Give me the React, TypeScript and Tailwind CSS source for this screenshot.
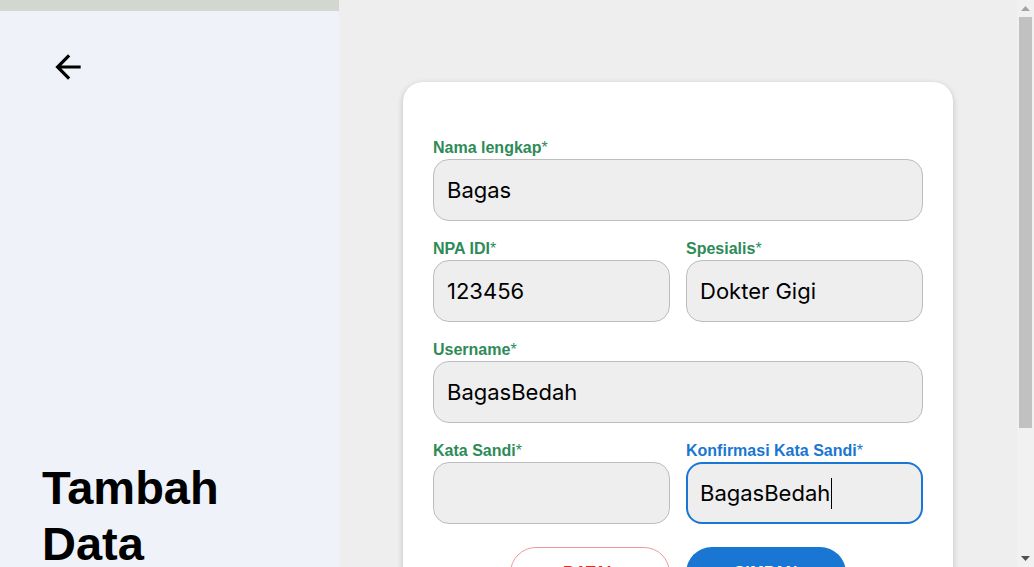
import React from "react";

const labelCls =
  "block h-[18px] leading-[18px] text-[16px] font-bold text-[#2e8b57] [font-family:'Liberation_Sans',Arial,sans-serif] whitespace-nowrap";

function Field({
  label,
  value,
  focused,
}: {
  label: string;
  value: string;
  focused?: boolean;
}) {
  return (
    <div className="flex flex-col">
      <label
        className={
          focused
            ? "block h-[18px] leading-[18px] text-[16px] font-bold text-[#1976d2] [font-family:'Liberation_Sans',Arial,sans-serif] whitespace-nowrap"
            : labelCls
        }
      >
        {label}
        <span className="font-normal">*</span>
      </label>
      <div
        className={
          focused
            ? "mt-[2px] h-[62px] rounded-2xl border-2 border-[#1976d2] bg-[#eeeeee] pl-[12px] flex items-center text-[22px] text-black [font-family:Inter,'Noto_Sans',sans-serif]"
            : "mt-[2px] h-[62px] rounded-2xl border border-[#bdbdbd] bg-[#eeeeee] pl-[13px] flex items-center text-[22px] text-black [font-family:Inter,'Noto_Sans',sans-serif]"
        }
      >
        <span>{value}</span>
        {focused && <span className="ml-[1px] inline-block w-[1px] h-[31px] bg-black" />}
      </div>
    </div>
  );
}

function Scrollbar() {
  return (
    <div className="sticky top-0 h-[567px] w-[17px] shrink-0 bg-[#f1f1f1] flex flex-col">
      <div className="h-[17px] flex items-center justify-center">
        <svg width="9" height="5" viewBox="0 0 9 5">
          <polygon points="0,5 9,5 4.5,0" fill="#a3a3a3" />
        </svg>
      </div>
      <div className="flex-1 px-[2px]">
        <div className="h-[411px] bg-[#c1c1c1]" />
      </div>
      <div className="h-[17px] flex items-center justify-center">
        <svg width="9" height="5" viewBox="0 0 9 5">
          <polygon points="0,0 9,0 4.5,5" fill="#505050" />
        </svg>
      </div>
    </div>
  );
}

export default function App() {
  return (
    <div className="flex w-full items-start">
      <div className="flex flex-1 min-h-[735px]">
        <aside className="w-1/3 shrink-0 bg-[#eff2f8] flex flex-col">
          <div className="h-[11px] bg-[#d4d6d0]" />
          <button className="ml-[49px] mt-[37px] w-[38px] h-[38px] text-black">
            <svg viewBox="0 0 24 24" width="38" height="38" fill="currentColor">
              <path d="M20 11H7.83l5.59-5.59L12 4l-8 8 8 8 1.41-1.41L7.83 13H20v-2z" />
            </svg>
          </button>
          <h1 className="mt-[374px] pl-[42px] text-[47px] leading-[56px] font-bold text-black [font-family:'Liberation_Sans',Arial,sans-serif]">
            Tambah
            <br />
            Data
          </h1>
        </aside>
        <main className="flex-1 bg-[#eeeeee] flex justify-center pt-[82px] pb-[80px]">
          <div className="w-[550px] h-fit rounded-[20px] bg-white shadow-[0_2px_6px_rgba(0,0,0,0.2)] px-[30px] pt-[57px] pb-[40px]">
            <div className="flex flex-col gap-[19px]">
              <Field label="Nama lengkap" value="Bagas" />
              <div className="grid grid-cols-2 gap-x-[16px]">
                <Field label="NPA IDI" value="123456" />
                <Field label="Spesialis" value="Dokter Gigi" />
              </div>
              <Field label="Username" value="BagasBedah" />
              <div className="grid grid-cols-2 gap-x-[16px]">
                <Field label="Kata Sandi" value="" />
                <Field label="Konfirmasi Kata Sandi" value="BagasBedah" focused />
              </div>
            </div>
            <div className="mt-[23px] flex justify-center gap-[16px]">
              <button className="w-[160px] h-[52px] rounded-full border border-[#ef9a9a] bg-white text-[#d32f2f] text-[16px] font-bold tracking-wide [font-family:'Liberation_Sans',Arial,sans-serif]">
                BATAL
              </button>
              <button className="w-[160px] h-[52px] rounded-full bg-[#1976d2] text-white text-[16px] font-bold tracking-wide [font-family:'Liberation_Sans',Arial,sans-serif]">
                SIMPAN
              </button>
            </div>
          </div>
        </main>
      </div>
      <Scrollbar />
    </div>
  );
}
